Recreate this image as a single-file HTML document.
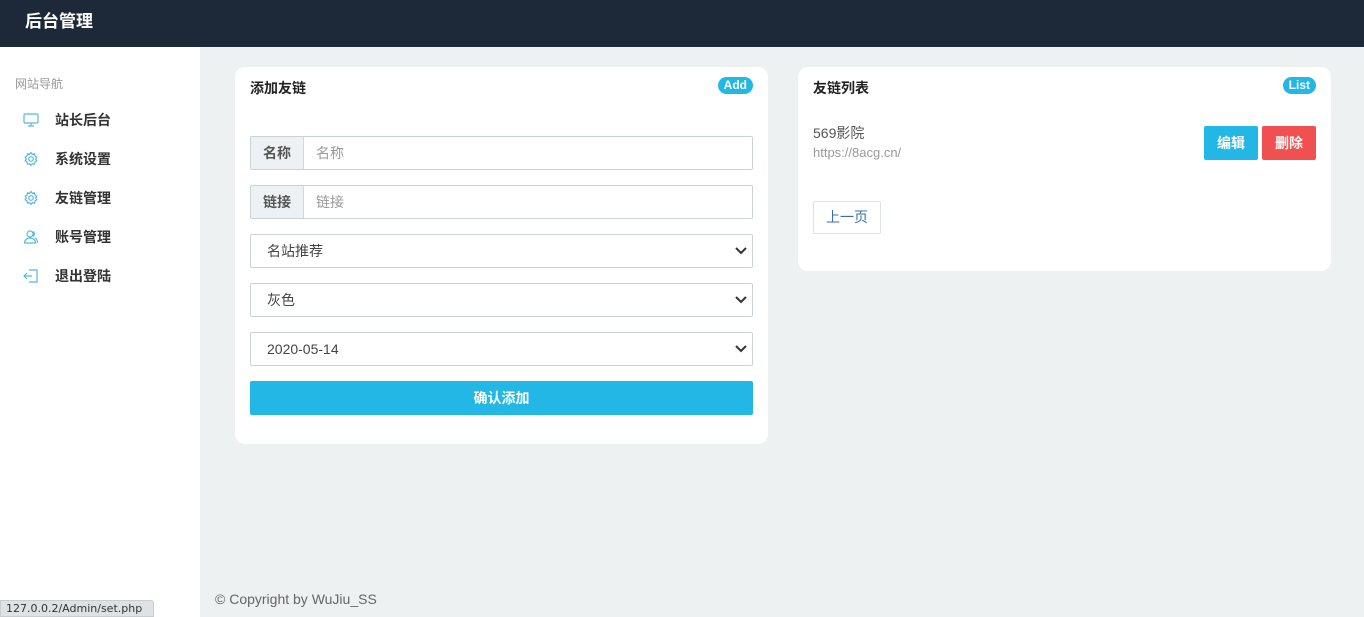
<!DOCTYPE html>
<html><head><meta charset="utf-8"><style>
*{box-sizing:border-box;margin:0;padding:0}
body{width:1364px;height:617px;overflow:hidden;background:#eef1f1;font-family:"Liberation Sans","Noto Sans CJK SC",sans-serif;font-size:14px;color:#333;position:relative}
.top{position:absolute;left:0;top:0;width:1364px;height:47px;background:#1d2939;color:#fff;font-weight:bold;font-size:17px;line-height:43px;padding-left:25px}
.side{position:absolute;left:0;top:47px;width:200px;height:570px;background:#fff}
.side .t{position:absolute;left:15px;top:28px;font-size:12px;color:#999}
.item{position:absolute;left:0;height:20px;font-weight:bold;font-size:14px;color:#333}
.item svg{position:absolute;left:23px;top:2px}
.item span{position:absolute;left:55px;top:0;white-space:nowrap;line-height:20px}
.card{position:absolute;background:#fff;border-radius:10px}
.card h3{position:absolute;left:15px;top:11px;font-size:14px;font-weight:bold;color:#222}
.badge{position:absolute;top:10px;right:15px;background:#23b7e5;color:#fff;font-size:12px;font-weight:bold;border-radius:9px;padding:0 6px;height:17px;line-height:17px}
.ig{position:absolute;left:15px;width:503px;height:34px;border:1px solid #ccd3d6;border-radius:2px;display:flex}
.ig .l{width:53px;background:#eef1f3;border-right:1px solid #d3d8da;text-align:center;line-height:32px;font-weight:bold;color:#555}
.ig .r{padding-left:12px;line-height:32px;color:#999}
.sel{position:absolute;left:15px;width:503px;height:34px;border:1px solid #ccd3d6;border-radius:2px;line-height:32px;padding-left:16px;color:#444}
.sel svg{position:absolute;right:5px;top:12px}
.btn{position:absolute;left:15px;top:314px;width:503px;height:34px;background:#23b7e5;color:#fff;font-weight:bold;text-align:center;line-height:34px;border-radius:2px}
</style></head><body>
<div class="top">后台管理</div>
<div class="side">
<div class="t">网站导航</div>
<div class="item" style="top:63px"><svg width="16" height="16" viewBox="0 0 16 16" fill="none" stroke="#5bb8dc" stroke-width="1.2"><rect x="1" y="2" width="14" height="9" rx="1"/><path d="M8 11v3M5 14h6"/></svg><span>站长后台</span></div>
<div class="item" style="top:102px"><svg width="16" height="16" viewBox="0 0 16 16" fill="none" stroke="#5bb8dc" stroke-width="1.2"><circle cx="8" cy="8" r="2.3"/><path d="M8 1.5l1.3 1.8 2.2-.5.5 2.2 1.8 1.3-1.2 1.7 1.2 1.7-1.8 1.3-.5 2.2-2.2-.5L8 14.5l-1.3-1.8-2.2.5-.5-2.2-1.8-1.3L3.4 8 2.2 6.3 4 5l.5-2.2 2.2.5z"/></svg><span>系统设置</span></div>
<div class="item" style="top:141px"><svg width="16" height="16" viewBox="0 0 16 16" fill="none" stroke="#5bb8dc" stroke-width="1.2"><circle cx="8" cy="8" r="2.3"/><path d="M8 1.5l1.3 1.8 2.2-.5.5 2.2 1.8 1.3-1.2 1.7 1.2 1.7-1.8 1.3-.5 2.2-2.2-.5L8 14.5l-1.3-1.8-2.2.5-.5-2.2-1.8-1.3L3.4 8 2.2 6.3 4 5l.5-2.2 2.2.5z"/></svg><span>友链管理</span></div>
<div class="item" style="top:180px"><svg width="16" height="16" viewBox="0 0 16 16" fill="none" stroke="#5bb8dc" stroke-width="1.2"><circle cx="7" cy="5" r="3"/><path d="M1.5 14c0-3 2.5-5 5.5-5s5.5 2 5.5 5zM10 2.5a3 3 0 010 5M12 9c1.5.8 2.5 2.5 2.5 5"/></svg><span>账号管理</span></div>
<div class="item" style="top:219px"><svg width="16" height="16" viewBox="0 0 16 16" fill="none" stroke="#5bb8dc" stroke-width="1.2"><path d="M6 2h8v12H6M1 8h8M4 5L1 8l3 3"/></svg><span>退出登陆</span></div>
</div>
<div class="card" style="left:235px;top:67px;width:533px;height:377px">
<h3>添加友链</h3><div class="badge">Add</div>
<div class="ig" style="top:69px"><div class="l">名称</div><div class="r">名称</div></div>
<div class="ig" style="top:118px"><div class="l">链接</div><div class="r">链接</div></div>
<div class="sel" style="top:167px">名站推荐<svg width="12" height="8" viewBox="0 0 12 8"><path d="M1 1l5 5 5-5" stroke="#333" stroke-width="2" fill="none"/></svg></div>
<div class="sel" style="top:216px">灰色<svg width="12" height="8" viewBox="0 0 12 8"><path d="M1 1l5 5 5-5" stroke="#333" stroke-width="2" fill="none"/></svg></div>
<div class="sel" style="top:265px">2020-05-14<svg width="12" height="8" viewBox="0 0 12 8"><path d="M1 1l5 5 5-5" stroke="#333" stroke-width="2" fill="none"/></svg></div>
<div class="btn">确认添加</div>
</div>
<div class="card" style="left:798px;top:67px;width:533px;height:204px">
<h3>友链列表</h3><div class="badge">List</div>
<div style="position:absolute;left:15px;top:56px;color:#555">569影院</div>
<div style="position:absolute;left:15px;top:78px;color:#999;font-size:13px">https://8acg.cn/</div>
<div style="position:absolute;left:406px;top:59px;width:54px;height:34px;background:#23b7e5;color:#fff;border-radius:2px;text-align:center;line-height:34px;font-weight:bold">编辑</div>
<div style="position:absolute;left:464px;top:59px;width:54px;height:34px;background:#f05050;color:#fff;border-radius:2px;text-align:center;line-height:34px;font-weight:bold">删除</div>
<div style="position:absolute;left:15px;top:134px;width:68px;height:33px;border:1px solid #dde2e4;border-radius:2px;text-align:center;line-height:31px;color:#3a6fa8">上一页</div>
</div>
<div style="position:absolute;left:215px;top:591px;color:#666">© Copyright by WuJiu_SS</div>
<div style="position:absolute;left:0;top:600px;width:154px;height:17px;background:#dfe2e5;border:1px solid #c9ccd0;border-radius:0 3px 0 0;font-family:'DejaVu Sans',sans-serif;font-size:11px;line-height:16px;padding-left:5px;color:#333;white-space:nowrap;overflow:hidden">127.0.0.2/Admin/set.php</div>
</body></html>
